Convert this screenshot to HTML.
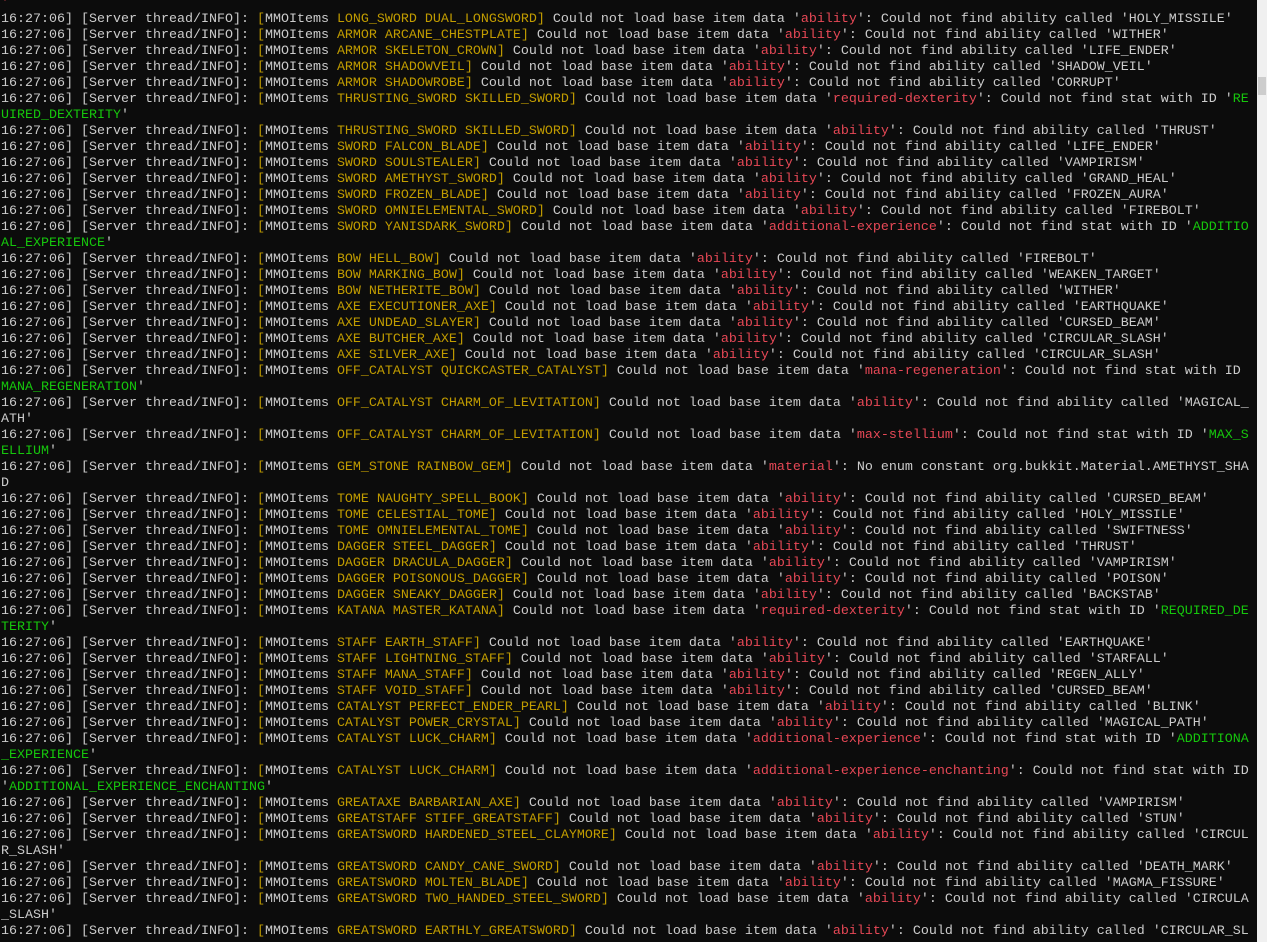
<!DOCTYPE html>
<html><head><meta charset="utf-8"><style>
html,body{margin:0;padding:0;background:#0c0c0c;width:1267px;height:942px;overflow:hidden}
pre{position:absolute;left:1px;top:-4px;margin:0;width:1256px;overflow:hidden;font-family:"Liberation Mono",monospace;font-size:13.33px;line-height:16px;color:#cccccc;white-space:pre}
i{font-style:normal;color:#c19c00}
b{font-weight:normal;color:#e74856}
u{text-decoration:none;color:#16c60c}
#sb{position:absolute;left:1257px;top:0;width:10px;height:942px;background:#f0f0f0}
#th{position:absolute;left:1258px;top:77px;width:8px;height:18px;background:#cdcdcd}
</style></head><body>
<pre><b>'</b>
16:27:06] [Server thread/INFO]: <i>[</i>MMOItems <i>LONG_SWORD DUAL_LONGSWORD]</i> Could not load base item data '<b>ability</b>': Could not find ability called 'HOLY_MISSILE'
16:27:06] [Server thread/INFO]: <i>[</i>MMOItems <i>ARMOR ARCANE_CHESTPLATE]</i> Could not load base item data '<b>ability</b>': Could not find ability called 'WITHER'
16:27:06] [Server thread/INFO]: <i>[</i>MMOItems <i>ARMOR SKELETON_CROWN]</i> Could not load base item data '<b>ability</b>': Could not find ability called 'LIFE_ENDER'
16:27:06] [Server thread/INFO]: <i>[</i>MMOItems <i>ARMOR SHADOWVEIL]</i> Could not load base item data '<b>ability</b>': Could not find ability called 'SHADOW_VEIL'
16:27:06] [Server thread/INFO]: <i>[</i>MMOItems <i>ARMOR SHADOWROBE]</i> Could not load base item data '<b>ability</b>': Could not find ability called 'CORRUPT'
16:27:06] [Server thread/INFO]: <i>[</i>MMOItems <i>THRUSTING_SWORD SKILLED_SWORD]</i> Could not load base item data '<b>required-dexterity</b>': Could not find stat with ID '<u>RE</u>
<u>UIRED_DEXTERITY</u>'
16:27:06] [Server thread/INFO]: <i>[</i>MMOItems <i>THRUSTING_SWORD SKILLED_SWORD]</i> Could not load base item data '<b>ability</b>': Could not find ability called 'THRUST'
16:27:06] [Server thread/INFO]: <i>[</i>MMOItems <i>SWORD FALCON_BLADE]</i> Could not load base item data '<b>ability</b>': Could not find ability called 'LIFE_ENDER'
16:27:06] [Server thread/INFO]: <i>[</i>MMOItems <i>SWORD SOULSTEALER]</i> Could not load base item data '<b>ability</b>': Could not find ability called 'VAMPIRISM'
16:27:06] [Server thread/INFO]: <i>[</i>MMOItems <i>SWORD AMETHYST_SWORD]</i> Could not load base item data '<b>ability</b>': Could not find ability called 'GRAND_HEAL'
16:27:06] [Server thread/INFO]: <i>[</i>MMOItems <i>SWORD FROZEN_BLADE]</i> Could not load base item data '<b>ability</b>': Could not find ability called 'FROZEN_AURA'
16:27:06] [Server thread/INFO]: <i>[</i>MMOItems <i>SWORD OMNIELEMENTAL_SWORD]</i> Could not load base item data '<b>ability</b>': Could not find ability called 'FIREBOLT'
16:27:06] [Server thread/INFO]: <i>[</i>MMOItems <i>SWORD YANISDARK_SWORD]</i> Could not load base item data '<b>additional-experience</b>': Could not find stat with ID '<u>ADDITIO</u>
<u>AL_EXPERIENCE</u>'
16:27:06] [Server thread/INFO]: <i>[</i>MMOItems <i>BOW HELL_BOW]</i> Could not load base item data '<b>ability</b>': Could not find ability called 'FIREBOLT'
16:27:06] [Server thread/INFO]: <i>[</i>MMOItems <i>BOW MARKING_BOW]</i> Could not load base item data '<b>ability</b>': Could not find ability called 'WEAKEN_TARGET'
16:27:06] [Server thread/INFO]: <i>[</i>MMOItems <i>BOW NETHERITE_BOW]</i> Could not load base item data '<b>ability</b>': Could not find ability called 'WITHER'
16:27:06] [Server thread/INFO]: <i>[</i>MMOItems <i>AXE EXECUTIONER_AXE]</i> Could not load base item data '<b>ability</b>': Could not find ability called 'EARTHQUAKE'
16:27:06] [Server thread/INFO]: <i>[</i>MMOItems <i>AXE UNDEAD_SLAYER]</i> Could not load base item data '<b>ability</b>': Could not find ability called 'CURSED_BEAM'
16:27:06] [Server thread/INFO]: <i>[</i>MMOItems <i>AXE BUTCHER_AXE]</i> Could not load base item data '<b>ability</b>': Could not find ability called 'CIRCULAR_SLASH'
16:27:06] [Server thread/INFO]: <i>[</i>MMOItems <i>AXE SILVER_AXE]</i> Could not load base item data '<b>ability</b>': Could not find ability called 'CIRCULAR_SLASH'
16:27:06] [Server thread/INFO]: <i>[</i>MMOItems <i>OFF_CATALYST QUICKCASTER_CATALYST]</i> Could not load base item data '<b>mana-regeneration</b>': Could not find stat with ID 
<u>MANA_REGENERATION</u>'
16:27:06] [Server thread/INFO]: <i>[</i>MMOItems <i>OFF_CATALYST CHARM_OF_LEVITATION]</i> Could not load base item data '<b>ability</b>': Could not find ability called 'MAGICAL_
ATH'
16:27:06] [Server thread/INFO]: <i>[</i>MMOItems <i>OFF_CATALYST CHARM_OF_LEVITATION]</i> Could not load base item data '<b>max-stellium</b>': Could not find stat with ID '<u>MAX_S</u>
<u>ELLIUM</u>'
16:27:06] [Server thread/INFO]: <i>[</i>MMOItems <i>GEM_STONE RAINBOW_GEM]</i> Could not load base item data '<b>material</b>': No enum constant org.bukkit.Material.AMETHYST_SHA
D
16:27:06] [Server thread/INFO]: <i>[</i>MMOItems <i>TOME NAUGHTY_SPELL_BOOK]</i> Could not load base item data '<b>ability</b>': Could not find ability called 'CURSED_BEAM'
16:27:06] [Server thread/INFO]: <i>[</i>MMOItems <i>TOME CELESTIAL_TOME]</i> Could not load base item data '<b>ability</b>': Could not find ability called 'HOLY_MISSILE'
16:27:06] [Server thread/INFO]: <i>[</i>MMOItems <i>TOME OMNIELEMENTAL_TOME]</i> Could not load base item data '<b>ability</b>': Could not find ability called 'SWIFTNESS'
16:27:06] [Server thread/INFO]: <i>[</i>MMOItems <i>DAGGER STEEL_DAGGER]</i> Could not load base item data '<b>ability</b>': Could not find ability called 'THRUST'
16:27:06] [Server thread/INFO]: <i>[</i>MMOItems <i>DAGGER DRACULA_DAGGER]</i> Could not load base item data '<b>ability</b>': Could not find ability called 'VAMPIRISM'
16:27:06] [Server thread/INFO]: <i>[</i>MMOItems <i>DAGGER POISONOUS_DAGGER]</i> Could not load base item data '<b>ability</b>': Could not find ability called 'POISON'
16:27:06] [Server thread/INFO]: <i>[</i>MMOItems <i>DAGGER SNEAKY_DAGGER]</i> Could not load base item data '<b>ability</b>': Could not find ability called 'BACKSTAB'
16:27:06] [Server thread/INFO]: <i>[</i>MMOItems <i>KATANA MASTER_KATANA]</i> Could not load base item data '<b>required-dexterity</b>': Could not find stat with ID '<u>REQUIRED_DE</u>
<u>TERITY</u>'
16:27:06] [Server thread/INFO]: <i>[</i>MMOItems <i>STAFF EARTH_STAFF]</i> Could not load base item data '<b>ability</b>': Could not find ability called 'EARTHQUAKE'
16:27:06] [Server thread/INFO]: <i>[</i>MMOItems <i>STAFF LIGHTNING_STAFF]</i> Could not load base item data '<b>ability</b>': Could not find ability called 'STARFALL'
16:27:06] [Server thread/INFO]: <i>[</i>MMOItems <i>STAFF MANA_STAFF]</i> Could not load base item data '<b>ability</b>': Could not find ability called 'REGEN_ALLY'
16:27:06] [Server thread/INFO]: <i>[</i>MMOItems <i>STAFF VOID_STAFF]</i> Could not load base item data '<b>ability</b>': Could not find ability called 'CURSED_BEAM'
16:27:06] [Server thread/INFO]: <i>[</i>MMOItems <i>CATALYST PERFECT_ENDER_PEARL]</i> Could not load base item data '<b>ability</b>': Could not find ability called 'BLINK'
16:27:06] [Server thread/INFO]: <i>[</i>MMOItems <i>CATALYST POWER_CRYSTAL]</i> Could not load base item data '<b>ability</b>': Could not find ability called 'MAGICAL_PATH'
16:27:06] [Server thread/INFO]: <i>[</i>MMOItems <i>CATALYST LUCK_CHARM]</i> Could not load base item data '<b>additional-experience</b>': Could not find stat with ID '<u>ADDITIONA</u>
<u>_EXPERIENCE</u>'
16:27:06] [Server thread/INFO]: <i>[</i>MMOItems <i>CATALYST LUCK_CHARM]</i> Could not load base item data '<b>additional-experience-enchanting</b>': Could not find stat with ID
'<u>ADDITIONAL_EXPERIENCE_ENCHANTING</u>'
16:27:06] [Server thread/INFO]: <i>[</i>MMOItems <i>GREATAXE BARBARIAN_AXE]</i> Could not load base item data '<b>ability</b>': Could not find ability called 'VAMPIRISM'
16:27:06] [Server thread/INFO]: <i>[</i>MMOItems <i>GREATSTAFF STIFF_GREATSTAFF]</i> Could not load base item data '<b>ability</b>': Could not find ability called 'STUN'
16:27:06] [Server thread/INFO]: <i>[</i>MMOItems <i>GREATSWORD HARDENED_STEEL_CLAYMORE]</i> Could not load base item data '<b>ability</b>': Could not find ability called 'CIRCUL
R_SLASH'
16:27:06] [Server thread/INFO]: <i>[</i>MMOItems <i>GREATSWORD CANDY_CANE_SWORD]</i> Could not load base item data '<b>ability</b>': Could not find ability called 'DEATH_MARK'
16:27:06] [Server thread/INFO]: <i>[</i>MMOItems <i>GREATSWORD MOLTEN_BLADE]</i> Could not load base item data '<b>ability</b>': Could not find ability called 'MAGMA_FISSURE'
16:27:06] [Server thread/INFO]: <i>[</i>MMOItems <i>GREATSWORD TWO_HANDED_STEEL_SWORD]</i> Could not load base item data '<b>ability</b>': Could not find ability called 'CIRCULA
_SLASH'
16:27:06] [Server thread/INFO]: <i>[</i>MMOItems <i>GREATSWORD EARTHLY_GREATSWORD]</i> Could not load base item data '<b>ability</b>': Could not find ability called 'CIRCULAR_SL</pre>
<div id="sb"></div><div id="th"></div>
</body></html>
